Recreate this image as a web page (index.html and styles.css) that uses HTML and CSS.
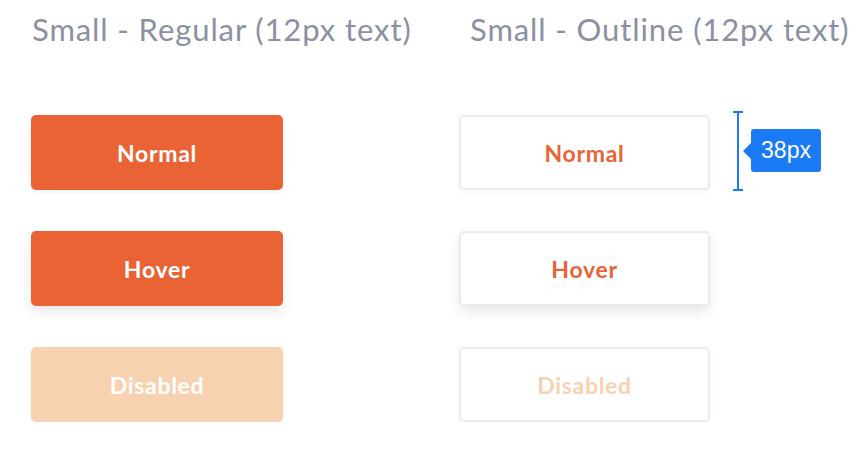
FILE: index.html
```html
<!DOCTYPE html>
<html>
<head>
<meta charset="utf-8">
<link rel="stylesheet" href="styles.css">
</head>
<body>
<div class="board">
  <h2 class="title">Small - Regular (12px text)</h2>
  <h2 class="title title-outline">Small - Outline (12px text)</h2>

  <div class="btn btn-solid">Normal</div>
  <div class="btn btn-outline">Normal
    <div class="measure">
      <span class="cap"></span><span class="line"></span><span class="cap"></span>
    </div>
    <div class="tip">38px</div>
  </div>

  <div class="btn btn-solid hover">Hover</div>
  <div class="btn btn-outline hover">Hover</div>

  <div class="btn btn-solid disabled">Disabled</div>
  <div class="btn btn-outline disabled">Disabled</div>
</div>
</body>
</html>
```
FILE: styles.css
```css
html, body {
  margin: 0;
  padding: 0;
  background: #ffffff;
}
.board {
  display: grid;
  grid-template-columns: 252px 251px;
  column-gap: 176px;
  row-gap: 41px;
  padding: 9px 0 0 31px;
  font-family: Lato, "Open Sans", sans-serif;
}
.title {
  margin: 0 0 24px 1px;
  font-size: 31px;
  font-weight: 400;
  line-height: 41px;
  color: #8b90a4;
  white-space: nowrap;
  letter-spacing: 0.9px;
}
.title-outline {
  margin-left: 11px;
}
.btn {
  position: relative;
  box-sizing: border-box;
  height: 75px;
  border-radius: 5px;
  display: flex;
  align-items: center;
  justify-content: center;
  font-size: 23px;
  font-weight: 700;
  letter-spacing: 0.7px;
}
.btn-solid {
  background: #ea6334;
  color: #ffffff;
  box-shadow: 0 2px 6px rgba(40, 40, 60, 0.06);
}
.btn-solid.hover {
  box-shadow: 0 6px 12px rgba(40, 40, 60, 0.1);
}
.btn-solid.disabled {
  background: #f8d1b1;
}
.btn-outline {
  background: #ffffff;
  border: 2px solid #ebebed;
  color: #ea6334;
  box-shadow: 0 2px 6px rgba(40, 40, 60, 0.04);
}
.btn-outline.hover {
  box-shadow: 0 6px 12px rgba(40, 40, 60, 0.1);
}
.btn-outline.disabled {
  color: #f8d1b1;
}
.measure {
  position: absolute;
  left: 272px;
  top: -6px;
  height: 80px;
  width: 10px;
  display: flex;
  flex-direction: column;
  align-items: center;
}
.measure .cap {
  width: 10px;
  height: 2px;
  background: #1a7bf4;
}
.measure .line {
  flex: 1;
  width: 2px;
  background: #1a7bf4;
}
.tip {
  position: absolute;
  left: 290px;
  top: 12px;
  width: 70px;
  height: 43px;
  box-sizing: border-box;
  background: #1a7bf4;
  border-radius: 3px;
  color: #ffffff;
  font-family: "Liberation Sans", Arial, sans-serif;
  font-weight: 400;
  font-size: 23px;
  letter-spacing: 0;
  display: flex;
  align-items: center;
  justify-content: center;
}
.tip::before {
  content: "";
  position: absolute;
  left: -8px;
  top: 14px;
  border-style: solid;
  border-width: 8px 8px 8px 0;
  border-color: transparent #1a7bf4 transparent transparent;
}
```
